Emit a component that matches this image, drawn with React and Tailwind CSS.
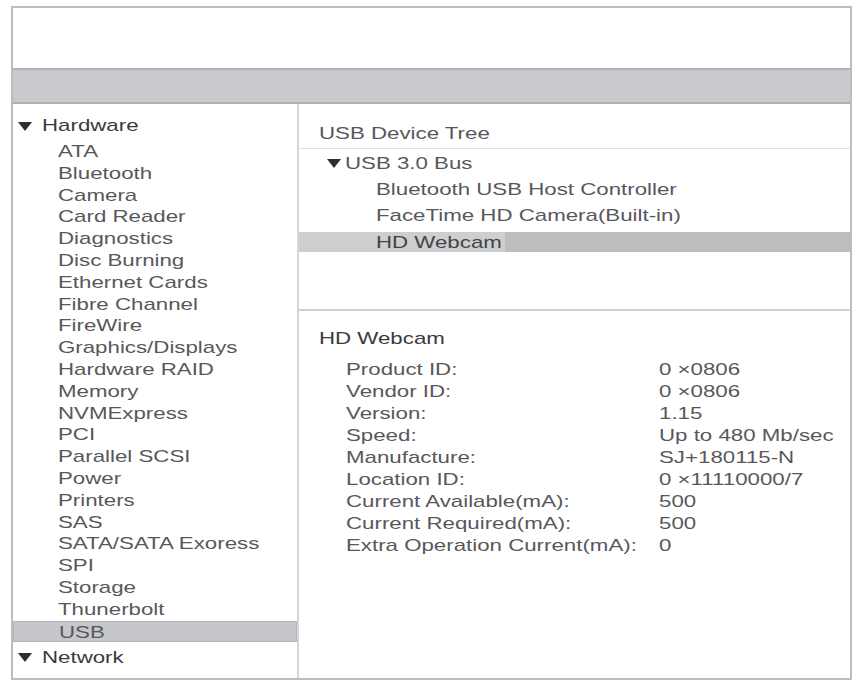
import React from "react";

const sidebarItems = [
  "ATA",
  "Bluetooth",
  "Camera",
  "Card Reader",
  "Diagnostics",
  "Disc Burning",
  "Ethernet Cards",
  "Fibre Channel",
  "FireWire",
  "Graphics/Displays",
  "Hardware RAID",
  "Memory",
  "NVMExpress",
  "PCI",
  "Parallel SCSI",
  "Power",
  "Printers",
  "SAS",
  "SATA/SATA Exoress",
  "SPI",
  "Storage",
  "Thunerbolt",
  "USB",
];

const details = [
  ["Product ID:", "0 ×0806"],
  ["Vendor ID:", "0 ×0806"],
  ["Version:", "1.15"],
  ["Speed:", "Up to 480 Mb/sec"],
  ["Manufacture:", "SJ+180115-N"],
  ["Location ID:", "0 ×11110000/7"],
  ["Current Available(mA):", "500"],
  ["Current Required(mA):", "500"],
  ["Extra Operation Current(mA):", "0"],
];

// stretched text, the screenshot is wider than plain Arial
function T({ children }) {
  return (
    <span className="inline-block origin-left scale-x-[1.31] whitespace-nowrap">
      {children}
    </span>
  );
}

function Arrow() {
  return (
    <svg width="14" height="9" viewBox="0 0 14 9" className="shrink-0">
      <polygon points="0,0 14,0 7,9" fill="#2e2e2e" />
    </svg>
  );
}

export default function App() {
  return (
    <div
      className="w-[857px] h-[684px] bg-white pt-[6px] pl-[11px] text-[17px] text-[#58585b]"
      style={{ fontFamily: '"Liberation Sans", Arial, sans-serif' }}
    >
      <div className="w-[841px] h-[674px] border-2 border-[#bdbdbf] flex flex-col">
        {/* top blank area + toolbar strip */}
        <div className="h-[60px] bg-white" />
        <div className="h-[36px] bg-[#c9cacd] border-y-2 border-[#aeafb2]" />

        <div className="flex flex-1 min-h-0">
          {/* sidebar */}
          <div className="w-[286px] border-r-2 border-[#d6d6d8] pt-[11px]">
            <div className="flex items-center h-[22px] pl-[5px] gap-[10px] text-[#3a3a3c]">
              <Arrow />
              <T>Hardware</T>
            </div>
            <div className="mt-[4px]">
              {sidebarItems.map((item) => (
                <div
                  key={item}
                  className={
                    item === "USB"
                      ? "h-[21.8px] leading-[21.8px] pl-[45px] bg-[#c6c7ca] border border-[#b3b4b7]"
                      : "h-[21.8px] leading-[21.8px] pl-[45px]"
                  }
                >
                  <T>{item}</T>
                </div>
              ))}
            </div>
            <div className="flex items-center h-[22px] mt-[4px] pl-[5px] gap-[10px] text-[#3a3a3c]">
              <Arrow />
              <T>Network</T>
            </div>
          </div>

          {/* right side */}
          <div className="flex-1 flex flex-col">
            <div className="h-[207px] border-b-2 border-[#cfcfd1]">
              <div className="h-[45px] pt-[19px] pl-[20px] leading-[22px] border-b border-[#e2e2e4]">
                <T>USB Device Tree</T>
              </div>
              <div className="h-[28px] flex items-center pl-[28px] gap-[4px] pt-[1px]">
                <Arrow />
                <T>USB 3.0 Bus</T>
              </div>
              <div className="h-[25px] flex items-center pl-[77px]">
                <T>Bluetooth USB Host Controller</T>
              </div>
              <div className="h-[26px] flex items-center pl-[77px] pt-[1px]">
                <T>FaceTime HD Camera(Built-in)</T>
              </div>
              <div className="mt-[4px] h-[20px] bg-[#bebec0] flex">
                <div className="w-[206px] h-full bg-[#cdced0] flex items-center pl-[77px] pt-[1px] text-[#444446]">
                  <T>HD Webcam</T>
                </div>
              </div>
            </div>

            <div className="pt-[17px] pl-[20px]">
              <div className="h-[22px] leading-[22px] text-[#3a3a3c]">
                <T>HD Webcam</T>
              </div>
              <div className="mt-[9px] pl-[27px]">
                {details.map(([label, value]) => (
                  <div key={label} className="flex h-[22px] leading-[22px]">
                    <div className="w-[313px]">
                      <T>{label}</T>
                    </div>
                    <div>
                      <T>{value}</T>
                    </div>
                  </div>
                ))}
              </div>
            </div>
          </div>
        </div>
      </div>
    </div>
  );
}
